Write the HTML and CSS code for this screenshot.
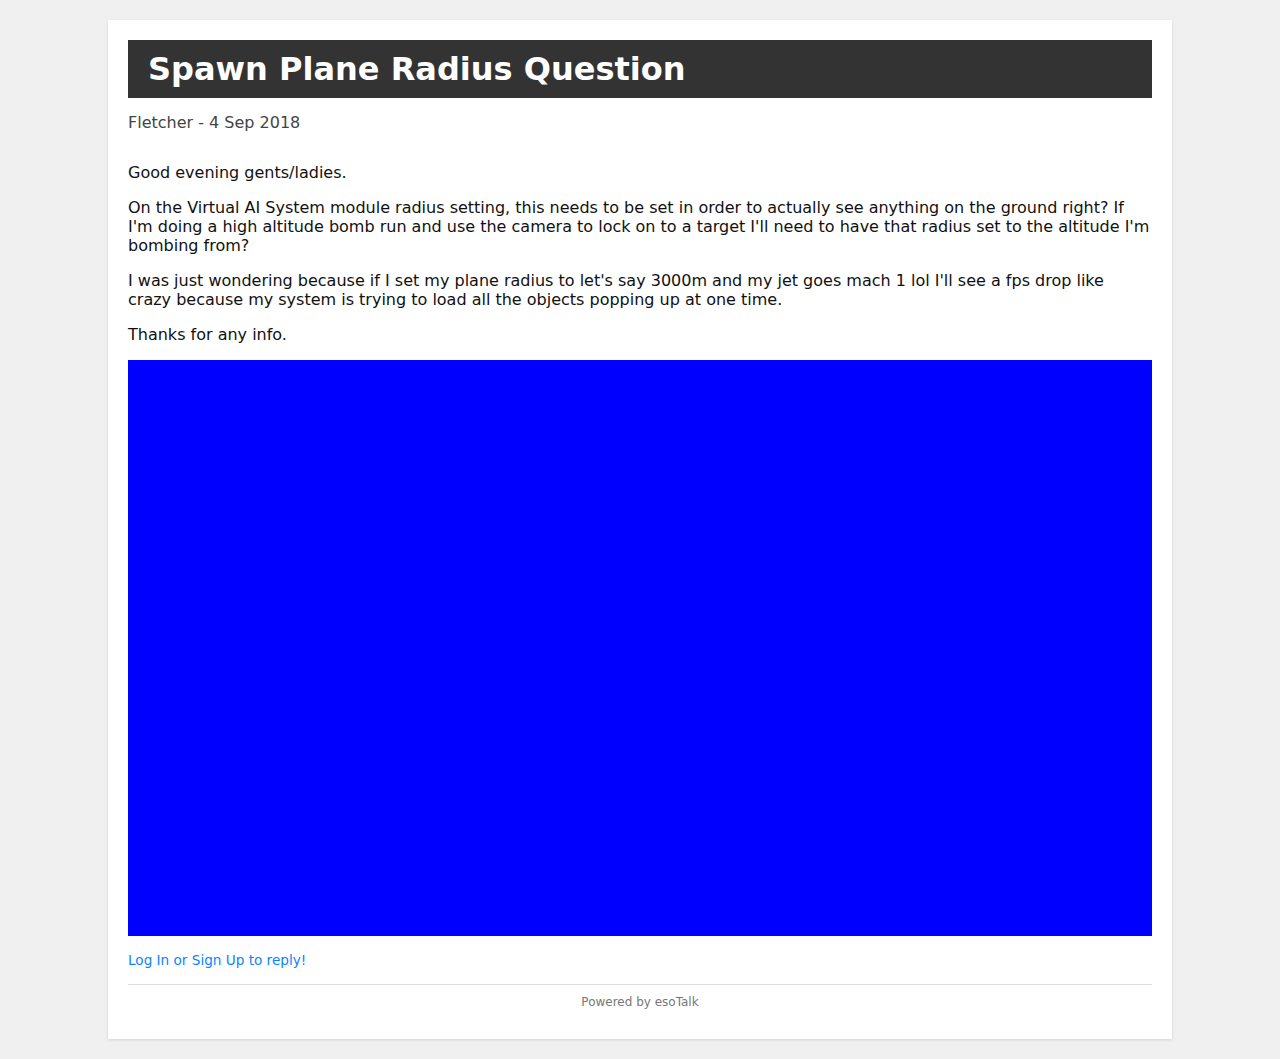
FILE: index.html
```html
<!DOCTYPE html>
<html>
<head>
<meta charset="utf-8">
<title>Spawn Plane Radius Question</title>
<link rel="stylesheet" href="styles.css">
</head>
<body>
<div class="page">
  <h1 class="title">Spawn Plane Radius Question</h1>
  <p class="meta">Fletcher - 4 Sep 2018</p>
  <div class="post">
    <p>Good evening gents/ladies.</p>
    <p>On the Virtual AI System module radius setting, this needs to be set in order to actually see anything on the ground right? If I'm doing a high altitude bomb run and use the camera to lock on to a target I'll need to have that radius set to the altitude I'm bombing from?</p>
    <p>I was just wondering because if I set my plane radius to let's say 3000m and my jet goes mach 1 lol I'll see a fps drop like crazy because my system is trying to load all the objects popping up at one time.</p>
    <p>Thanks for any info.</p>
    <div class="media"></div>
  </div>
  <p class="reply"><a href="#">Log In or Sign Up to reply!</a></p>
  <div class="footer">Powered by esoTalk</div>
</div>
</body>
</html>
```

FILE: styles.css
```css
html, body {
  margin: 0;
  padding: 0;
  background: #f0f0f0;
}
body {
  font-family: "DejaVu Sans", Verdana, sans-serif;
  color: #111;
  font-size: 16px;
}
.page {
  width: 1024px;
  margin: 20px auto;
  padding: 20px;
  background: #fff;
  box-shadow: 0 1px 3px rgba(0,0,0,0.12);
}
.title {
  margin: 0;
  background: #333;
  color: #fff;
  font-size: 32px;
  font-weight: bold;
  padding: 10px 20px;
  line-height: 38px;
}
.meta {
  margin: 15px 0 31px;
  line-height: 19px;
  color: #444;
}
.post p {
  margin: 16px 0;
}
.post p:first-child {
  margin-top: 0;
}
.media {
  width: 1024px;
  height: 576px;
  background: #00f;
}
.reply {
  margin: 16px 0;
  font-size: 13.6px;
  line-height: 16px;
}
.reply a {
  color: #0a84ff;
  text-decoration: none;
}
.footer {
  border-top: 1px solid #ddd;
  padding: 10px 0;
  font-size: 12px;
  line-height: 14px;
  color: #777;
  text-align: center;
}
```
